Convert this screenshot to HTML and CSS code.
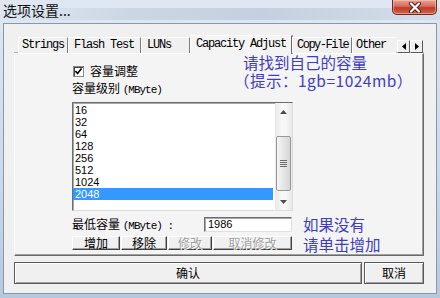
FILE: index.html
```html
<!DOCTYPE html>
<html>
<head>
<meta charset="utf-8">
<link rel="stylesheet" href="styles.css">
</head>
<body>
<div class="window">
  <div class="titlebar">
    <span class="title">选项设置...</span>
    <div class="close">
      <svg width="16" height="11" viewBox="0 0 16 11">
        <path d="M4 1.5 L12 9.5 M12 1.5 L4 9.5" stroke="#4a1c14" stroke-width="4" stroke-linecap="round"/>
        <path d="M4 1.5 L12 9.5 M12 1.5 L4 9.5" stroke="#ffffff" stroke-width="2.2" stroke-linecap="round"/>
      </svg>
    </div>
  </div>
  <div class="client">
    <div class="tabbar">
      <div class="tabs">
        <div class="tab t-strings">Strings</div>
        <div class="tab t-flash">Flash Test</div>
        <div class="tab t-luns">LUNs</div>
        <div class="tab t-cap selected">Capacity Adjust</div>
        <div class="tab t-copy">Copy-File</div>
        <div class="tab t-other">Other</div>
      </div>
      <div class="spin">
        <div class="spin-btn"><svg width="4" height="7" viewBox="0 0 4 7"><path d="M4 0 L0 3.5 L4 7 Z" fill="#000"/></svg></div>
        <div class="spin-btn"><svg width="4" height="7" viewBox="0 0 4 7"><path d="M0 0 L4 3.5 L0 7 Z" fill="#000"/></svg></div>
      </div>
    </div>
    <div class="panel">
      <div class="top">
        <div class="top-left">
          <div class="check">
            <span class="box"><svg width="9" height="9" viewBox="0 0 9 9"><path d="M1.5 4 L3.5 6.5 L7.5 1.5" stroke="#000" stroke-width="1.6" fill="none"/></svg></span>
            <span>容量调整</span>
          </div>
          <div class="caption">容量级别 <span class="mono">(MByte)</span></div>
        </div>
        <div class="hint hint1">
          <div class="hline">请找到自己的容量</div>
          <div class="hline hline-paren">（提示：1gb=1024mb）</div>
        </div>
      </div>
      <div class="list">
        <div class="items">
          <div class="item">16</div>
          <div class="item">32</div>
          <div class="item">64</div>
          <div class="item">128</div>
          <div class="item">256</div>
          <div class="item">512</div>
          <div class="item">1024</div>
          <div class="item sel">2048</div>
        </div>
        <div class="scrollbar">
          <div class="arrow"><svg width="7" height="4" viewBox="0 0 7 4"><path d="M0 4 L3.5 0 L7 4 Z" fill="#4d4d4d"/></svg></div>
          <div class="track-top"></div>
          <div class="thumb">
            <span class="grip"></span><span class="grip"></span><span class="grip"></span><span class="grip"></span>
          </div>
          <div class="track-bottom"></div>
          <div class="arrow"><svg width="7" height="4" viewBox="0 0 7 4"><path d="M0 0 L3.5 4 L7 0 Z" fill="#4d4d4d"/></svg></div>
        </div>
      </div>
      <div class="bottom">
        <div class="fields">
          <div class="minrow">
            <span>最低容量 <span class="mono">(MByte) :</span></span>
            <div class="input">1986</div>
          </div>
          <div class="btnrow">
            <div class="sbtn b-add">增加</div>
            <div class="sbtn b-del">移除</div>
            <div class="sbtn b-mod disabled">修改</div>
            <div class="sbtn b-undo disabled">取消修改</div>
          </div>
        </div>
        <div class="hint hint2">
          <div class="hline2">如果没有</div>
          <div class="hline2">请单击增加</div>
        </div>
      </div>
    </div>
    <div class="actions">
      <div class="btn ok">确认</div>
      <div class="btn cancel">取消</div>
    </div>
  </div>
</div>
</body>
</html>
```
FILE: styles.css
```css
* { box-sizing: border-box; }
html, body { margin: 0; padding: 0; }
body {
  width: 440px;
  height: 298px;
  overflow: hidden;
  font-family: "Noto Sans CJK SC", "Liberation Sans", sans-serif;
  font-size: 12px;
  color: #000;
}
.window {
  width: 440px;
  height: 298px;
  display: flex;
  flex-direction: column;
  background:
    linear-gradient(90deg, rgba(120,140,170,0) 0%, rgba(120,140,170,0.18) 30%, rgba(120,140,170,0.25) 60%, rgba(120,140,170,0.1) 100%) 0 8px / 100% 12px no-repeat,
    linear-gradient(180deg, #dfe8f2 0%, #cbd8e7 60%, #b7c8dc 100%);
}
.titlebar {
  height: 23px;
  display: flex;
  justify-content: space-between;
  align-items: flex-start;
  padding-left: 3px;
  padding-right: 3px;
}
.title {
  font-size: 14px;
  line-height: 17px;
  margin-top: 2px;
  color: #111;
}
.close {
  width: 45px;
  height: 15px;
  border: 1px solid #6e2a1f;
  border-top: none;
  border-radius: 0 0 5px 5px;
  background: linear-gradient(180deg, #e8a293 0%, #d46d58 45%, #c0392a 55%, #d0664c 100%);
  display: flex;
  align-items: center;
  justify-content: center;
  box-shadow: inset 0 0 0 1px rgba(255,210,200,0.5);
}
.client {
  margin-left: 3px;
  width: 434px;
  height: 271px;
  border: 1px solid #8799b0;
  background: #f0f0f0;
  padding: 11px 12px 0 10px;
  display: flex;
  flex-direction: column;
}
.tabbar {
  height: 19px;
  margin-bottom: -1px;
  display: flex;
  position: relative;
  z-index: 1;
}
.tabs {
  margin-left: 4px;
  width: 378px;
  height: 19px;
  overflow: hidden;
  display: flex;
  align-items: flex-start;
  flex: none;
}
.tab {
  flex: none;
  height: 16px;
  margin-top: 2px;
  padding-left: 5px;
  font-family: "Liberation Mono", monospace;
  font-size: 12px;
  letter-spacing: -1.2px;
  line-height: 15px;
  white-space: nowrap;
  border-top: 1px solid #ffffff;
  border-left: 1px solid #ffffff;
  border-right: 1px solid #7a7a7a;
  background: #f0f0f0;
}
.t-strings { width: 50px; padding-left: 3px; }
.t-flash { width: 73px; }
.t-luns { width: 49px; }
.t-cap { width: 102px; }
.t-copy { width: 60px; padding-left: 4px; letter-spacing: -1.5px; }
.t-other { width: 44px; padding-left: 3px; border-right: none; }
.tab.selected {
  height: 19px;
  margin-top: 0;
  line-height: 17px;
  background: #f4f4f4;
  border-top: 1px solid #ffffff;
  border-left: 1px solid #ffffff;
  border-right: 1px solid #696969;
  box-shadow: 1px 0 0 #a0a0a0;
}
.spin {
  display: flex;
  margin-left: 1px;
  margin-top: 5px;
  height: 13px;
}
.spin-btn {
  width: 13px;
  height: 13px;
  background: #f0f0f0;
  border-top: 1px solid #ffffff;
  border-left: 1px solid #ffffff;
  border-right: 1px solid #5a5a5a;
  border-bottom: 1px solid #5a5a5a;
  display: flex;
  align-items: center;
  justify-content: center;
}
.panel {
  height: 203px;
  width: 410px;
  background: #f4f4f4;
  border-top: 1px solid #ffffff;
  border-left: 1px solid #ffffff;
  border-right: 1px solid #696969;
  border-bottom: 1px solid #696969;
  box-shadow: inset -1px -1px 0 #a0a0a0, 0 -1px 0 #b0b0b0;
  padding-left: 57px;
  display: flex;
  flex-direction: column;
}
.top {
  display: flex;
  align-items: flex-start;
}
.top-left {
  width: 171px;
  padding-top: 10px;
}
.check {
  display: flex;
  align-items: center;
  height: 14px;
  line-height: 14px;
  font-size: 12px;
}
.box {
  width: 11px;
  height: 11px;
  margin-left: 1px;
  margin-right: 6px;
  background: #fff;
  border: 1px solid #8a8a8a;
  box-shadow: inset 1px 1px 0 #404040;
  display: flex;
  align-items: center;
  justify-content: center;
}
.caption {
  height: 14px;
  line-height: 14px;
  margin-top: 3px;
}
.mono {
  font-family: "Liberation Mono", monospace;
  font-size: 11px;
  letter-spacing: -1px;
}
.hint {
  color: #3d3dc6;
  font-size: 15.5px;
  white-space: nowrap;
}
.hint1 {
  margin-top: -1px;
}
.hline {
  height: 18px;
  line-height: 18px;
}
.hline-paren {
  margin-left: -9px;
  letter-spacing: 0.5px;
}
.list {
  margin-top: 7px;
  width: 221px;
  height: 109px;
  background: #fff;
  border: 1px solid;
  border-color: #6d6d6d #dcdcdc #dcdcdc #6d6d6d;
  box-shadow: inset 1px 1px 0 #a8a8a8;
  display: flex;
}
.items {
  flex: 1;
  padding-top: 1px;
  padding-right: 2px;
  font-family: "Liberation Sans", sans-serif;
  font-size: 11px;
}
.item {
  height: 12px;
  line-height: 12px;
  padding-left: 2px;
}
.item.sel {
  background: #3399ff;
  color: #fff;
}
.scrollbar {
  width: 17px;
  display: flex;
  flex-direction: column;
  background: linear-gradient(90deg, #e8e8e8, #f8f8f8 40%, #f8f8f8 60%, #e8e8e8);
}
.arrow {
  height: 17px;
  display: flex;
  align-items: center;
  justify-content: center;
}
.track-top { height: 16px; }
.track-bottom { flex: 1; }
.thumb {
  height: 55px;
  margin: 0 1px;
  border: 1px solid #979797;
  border-radius: 2px;
  background: linear-gradient(90deg, #f4f4f4, #e6e6e6 50%, #d6d6d6);
  display: flex;
  flex-direction: column;
  align-items: center;
  justify-content: center;
  gap: 1px;
}
.grip {
  width: 7px;
  height: 1px;
  background: #6a6a6a;
}
.bottom {
  margin-top: 5px;
  display: flex;
  align-items: flex-start;
}
.fields {
  width: 221px;
}
.minrow {
  height: 17px;
  display: flex;
  align-items: center;
  justify-content: space-between;
  line-height: 14px;
}
.input {
  width: 88px;
  height: 15px;
  margin-right: 1px;
  background: #fff;
  border: 1px solid;
  border-color: #6d6d6d #e0e0e0 #e0e0e0 #6d6d6d;
  box-shadow: inset 1px 1px 0 #a8a8a8;
  font-family: "Liberation Sans", sans-serif;
  font-size: 11px;
  line-height: 13px;
  padding-left: 3px;
}
.btnrow {
  margin-top: 3px;
  display: flex;
  gap: 1px;
}
.sbtn {
  height: 14px;
  line-height: 12px;
  text-align: center;
  font-size: 12px;
  background: #f0f0f0;
  border-top: 1px solid #ffffff;
  border-left: 1px solid #ffffff;
  border-right: 1px solid #404040;
  border-bottom: 1px solid #404040;
  box-shadow: inset -1px -1px 0 #a0a0a0;
}
.b-add { width: 48px; }
.b-del { width: 46px; }
.b-mod { width: 44px; }
.b-undo { width: 79px; }
.sbtn.disabled {
  color: #a0a0a0;
  text-shadow: 1px 1px 0 #ffffff;
}
.hint2 {
  margin-left: 10px;
  margin-top: -2px;
}
.hline2 {
  height: 20px;
  line-height: 20px;
}
.actions {
  margin-top: 6px;
  display: flex;
  gap: 2px;
}
.btn {
  height: 22px;
  line-height: 20px;
  text-align: center;
  font-size: 12px;
  background: #f0f0f0;
  border: 1px solid #5a5a5a;
  box-shadow: inset 1px 1px 0 #ffffff, inset -1px -1px 0 #a0a0a0;
}
.ok { width: 348px; }
.cancel { width: 60px; }
```
